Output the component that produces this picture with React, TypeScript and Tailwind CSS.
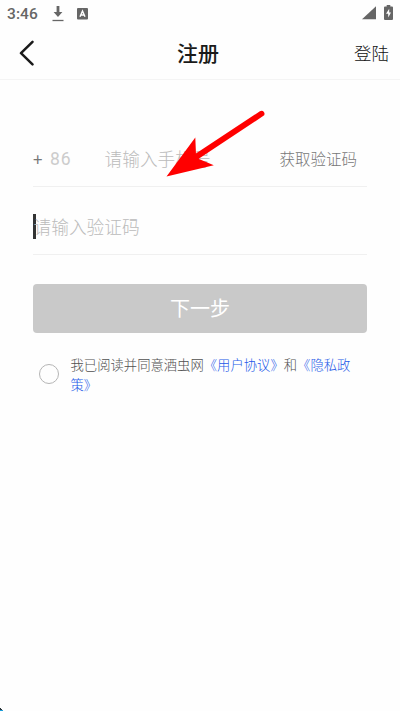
import React from 'react';

const StatusBar: React.FC = () => (
  <div className="flex h-7 items-center justify-between px-[7px] text-[#666666]">
    <div className="flex h-full items-center">
      <span className="w-[45px] font-['Roboto',sans-serif] text-[15.5px] font-medium leading-5 tracking-[0.1px]">3:46</span>
      <svg className="h-4 w-3" viewBox="0 0 12 16">
        <path d="M4.6 0h2.8v6h3L6 11 1.6 6h3z" fill="currentColor" />
        <path d="M.5 14.5h11" stroke="currentColor" strokeWidth="1.3" />
      </svg>
      <svg className="ml-[13px] h-3 w-[11px]" viewBox="0 0 11 12">
        <rect x="0" y="0" width="11" height="11.5" rx="1" fill="currentColor" />
        <path d="M3 8.7 5.5 3 8 8.7M3.9 7h3.2" fill="none" stroke="#ffffff" strokeWidth="1.4" />
      </svg>
    </div>
    <div className="flex h-full items-center gap-2 pb-[3px]">
      <svg className="mt-px h-[14px] w-[14px]" viewBox="0 0 14 14">
        <path d="M14 .2V13.2H0z" fill="currentColor" />
      </svg>
      <svg className="h-[15px] w-[9px]" viewBox="0 0 9 15">
        <path d="M2.7 0h3.6v1.5H8q1 0 1 1V14q0 1-1 1H1q-1 0-1-1V2.5q0-1 1-1h1.7z" fill="currentColor" />
        <path d="M5.2 3.8 2 8.8h2.2v3.7L7 7.6H5.2z" fill="#ffffff" />
      </svg>
    </div>
  </div>
);

const Header: React.FC = () => (
  <header className="grid h-[52px] grid-cols-3 items-center border-b border-[#f4f4f4] text-[#1a1a1a]">
    <button type="button" className="pb-px pl-[19px]">
      <svg className="h-[26px] w-4" viewBox="0 0 16 26">
        <path d="M13.5 1.8 2 13.2 13.5 24.3" fill="none" stroke="currentColor" strokeWidth="2.5" strokeLinecap="round" strokeLinejoin="round" />
      </svg>
    </button>
    <h1 className="pb-px pr-[4px] text-center text-[21px] font-medium">注册</h1>
    <span className="pr-[11px] text-right text-[17.5px] font-light text-[#111111]">登陆</span>
  </header>
);

// Red pointer laid over the phone field
const Arrow: React.FC = () => (
  <svg className="pointer-events-none absolute left-[160px] top-[104px] h-[80px] w-[112px]" viewBox="160 104 112 80">
    <path d="M261.500 113.700 196 157" stroke="#ff0000" strokeWidth="5.800" strokeLinecap="round" />
    <path d="M166.500 176.500 195.300 137.500 196 154.500 199 159 213.800 165.200z" fill="#ff0000" />
  </svg>
);

export default function App() {
  return (
    <div className="relative h-[711px] w-[400px] overflow-hidden bg-[#fefefe] font-['Noto_Sans_CJK_SC',sans-serif] font-light">
      <StatusBar />
      <Header />

      <main className="px-[33px] pt-[52px]">
        <div className="flex h-[55px] items-center border-b border-[#f0f0f0]">
          <span className="w-[17px] text-[17px] font-normal text-[#777777]">+</span>
          <span className="w-[54.5px] font-['Roboto',sans-serif] text-[17.5px] font-normal tracking-[0.8px] text-[#cccccc]">86</span>
          <span className="flex-1 pb-px text-[17.7px] text-[#bbbbbb]">请输入手机号</span>
          <span className="pr-[10px] text-[15.5px] text-[#777777]">获取验证码</span>
        </div>

        <div className="flex h-[68px] items-center border-b border-[#f0f0f0] pt-3">
          <span className="h-[25px] w-[2.5px] bg-[#333333]" />
          <span className="-ml-[2px] text-[17.7px] text-[#bbbbbb]">请输入验证码</span>
        </div>

        <button type="button" className="mt-[29px] h-[49px] w-full rounded-[4px] bg-[#c9c9c9] pb-[2px] text-[20px] font-normal text-white">
          下一步
        </button>

        <div className="mt-[22px] flex items-center">
          <span className="-mt-[2px] ml-[6px] h-5 w-5 shrink-0 rounded-full border border-[#b5b5b5]" />
          <p className="ml-[11.500px] w-[284px] break-all text-[13.33px] leading-5 text-[#505050]">
            我已阅读并同意酒虫网<span className="text-[#2559e8]">《用户协议》</span>和<span className="text-[#2559e8]">《隐私政<br />策》</span>
          </p>
        </div>
      </main>

      <Arrow />
      <svg className="absolute bottom-0 left-0 h-[3px] w-[3px]" viewBox="0 0 3 3">
        <path d="M0 0h1v1h1v1H0z" fill="#263238" />
        <path d="M0 2h3v1H0z" fill="#1c9dd8" />
      </svg>
    </div>
  );
}
